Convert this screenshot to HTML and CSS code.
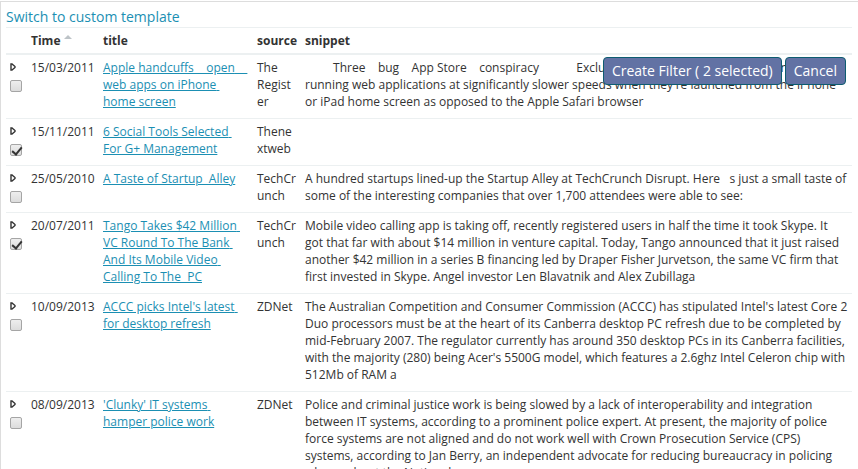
FILE: index.html
```html
<!DOCTYPE html>
<html lang="en">
<head>
<meta charset="utf-8">
<title>Documents</title>
<link rel="stylesheet" href="styles.css">
</head>
<body>
<main class="panel">
<a class="switch" href="#">Switch to custom template</a>
<div class="actions"><button type="button">Create Filter ( 2 selected)</button><button type="button">Cancel</button></div>
<table class="docs">
<colgroup><col class="c-select"><col class="c-time"><col class="c-title"><col class="c-source"><col></colgroup>
<thead>
<tr><th></th><th>Time <svg class="sort" viewBox="0 0 8 4" aria-hidden="true"><path d="M0 4 4 0l4 4z"/></svg></th><th>title</th><th>source</th><th>snippet</th></tr>
</thead>
<tbody>
<tr>
<td><svg class="expand" viewBox="0 0 6 8" aria-hidden="true"><path d="M1 1v6h1L5 4.500v-1L2 1z"/></svg><input type="checkbox" aria-label="Select row"></td>
<td>15/03/2011</td>
<td><a href="#">Apple handcuffs    open    web apps on iPhone home screen</a></td>
<td>The Register</td>
<td>         Three    bug    App Store    conspiracy            Exclusive  Apple's iOS mobile operating system running web applications at significantly slower speeds when they're launched from the iPhone or iPad home screen as opposed to the Apple Safari browser</td>
</tr>
<tr>
<td><svg class="expand" viewBox="0 0 6 8" aria-hidden="true"><path d="M1 1v6h1L5 4.500v-1L2 1z"/></svg><input type="checkbox" aria-label="Select row" checked></td>
<td>15/11/2011</td>
<td><a href="#">6 Social Tools Selected For G+ Management</a></td>
<td>Thenextweb</td>
<td></td>
</tr>
<tr>
<td><svg class="expand" viewBox="0 0 6 8" aria-hidden="true"><path d="M1 1v6h1L5 4.500v-1L2 1z"/></svg><input type="checkbox" aria-label="Select row"></td>
<td>25/05/2010</td>
<td><a href="#">A Taste of Startup  Alley</a></td>
<td>TechCrunch</td>
<td>A hundred startups lined-up the Startup Alley at TechCrunch Disrupt. Here   s just a small taste of some of the interesting companies that over 1,700 attendees were able to see:</td>
</tr>
<tr>
<td><svg class="expand" viewBox="0 0 6 8" aria-hidden="true"><path d="M1 1v6h1L5 4.500v-1L2 1z"/></svg><input type="checkbox" aria-label="Select row" checked></td>
<td>20/07/2011</td>
<td><a href="#">Tango Takes $42 Million VC Round To The Bank And Its Mobile Video Calling To The  PC</a></td>
<td>TechCrunch</td>
<td>Mobile video calling app is taking off, recently registered users in half the time it took Skype. It got that far with about $14 million in venture capital. Today, Tango announced that it just raised another $42 million in a series B financing led by Draper Fisher Jurvetson, the same VC firm that first invested in Skype. Angel investor Len Blavatnik and Alex Zubillaga</td>
</tr>
<tr>
<td><svg class="expand" viewBox="0 0 6 8" aria-hidden="true"><path d="M1 1v6h1L5 4.500v-1L2 1z"/></svg><input type="checkbox" aria-label="Select row"></td>
<td>10/09/2013</td>
<td><a href="#">ACCC picks Intel's latest for desktop refresh</a></td>
<td>ZDNet</td>
<td>The Australian Competition and Consumer Commission (ACCC) has stipulated Intel's latest Core 2 Duo processors must be at the heart of its Canberra desktop PC refresh due to be completed by mid-February 2007. The regulator currently has around 350 desktop PCs in its Canberra facilities, with the majority (280) being Acer's 5500G model, which features a 2.6ghz Intel Celeron chip with 512Mb of RAM a</td>
</tr>
<tr>
<td><svg class="expand" viewBox="0 0 6 8" aria-hidden="true"><path d="M1 1v6h1L5 4.500v-1L2 1z"/></svg><input type="checkbox" aria-label="Select row"></td>
<td>08/09/2013</td>
<td><a href="#">'Clunky' IT systems hamper police work</a></td>
<td>ZDNet</td>
<td>Police and criminal justice work is being slowed by a lack of interoperability and integration between IT systems, according to a prominent police expert. At present, the majority of police force systems are not aligned and do not work well with Crown Prosecution Service (CPS) systems, according to Jan Berry, an independent advocate for reducing bureaucracy in policing who works at the National</td>
</tr>
</tbody>
</table>
</main>
</body>
</html>
```
FILE: styles.css
```css
* { box-sizing: border-box; }
html { height: 100%; overflow: hidden; }
body {
  height: 100%;
  margin: 0;
  padding-top: 1px;
  overflow: hidden;
  background: #fff;
  color: #333;
  font: 12px/17px "Open Sans", sans-serif;
}
.panel {
  position: relative;
  border: solid #ddd;
  border-width: 1px 0 0 1px;
  padding: 5px 6px 0 5px;
}
a { color: #1b8fb3; }
.switch {
  display: block;
  font-size: 14px;
  line-height: 20px;
  text-decoration: none;
}
.actions {
  position: absolute;
  top: 55px;
  right: 12px;
  display: flex;
  gap: 3px;
}
.actions button {
  height: 28px;
  padding: 0 8px;
  border: 1px solid #0d5c70;
  border-radius: 4px;
  background: #6272a4;
  color: #fff;
  font: 14px/20px "Open Sans", sans-serif;
}
.docs {
  width: 100%;
  table-layout: fixed;
  border-collapse: separate;
  border-spacing: 0;
}
.c-select { width: 21px; }
.c-time { width: 72px; }
.c-title { width: 154px; }
.c-source { width: 48px; }
th {
  padding: 4px;
  border-top: 1px solid #ecf0f1;
  border-bottom: 2px solid #ecf0f1;
  text-align: left;
  white-space: nowrap;
}
td {
  padding: 4px 4px 8px;
  border-bottom: 1px solid #ecf0f1;
  vertical-align: top;
  white-space: pre-wrap;
  overflow-wrap: break-word;
}
.sort {
  width: 8px;
  height: 4px;
  vertical-align: 6px;
  fill: #bdc3c7;
}
.expand {
  display: block;
  width: 6px;
  height: 8px;
  margin: 4px 0 0;
  fill: none;
  stroke: #333;
  stroke-width: 1.4;
}
input {
  appearance: none;
  position: relative;
  display: block;
  width: 12px;
  height: 12px;
  margin: 9px 0 0;
  border: 1px solid #a5a5a5;
  border-radius: 2px;
  background: linear-gradient(#eee, #dcdcdc);
}
input:checked::after {
  content: "";
  position: absolute;
  top: 0;
  left: 3px;
  width: 4px;
  height: 8px;
  border: solid #333;
  border-width: 0 2px 2px 0;
  transform: rotate(40deg);
}
```
